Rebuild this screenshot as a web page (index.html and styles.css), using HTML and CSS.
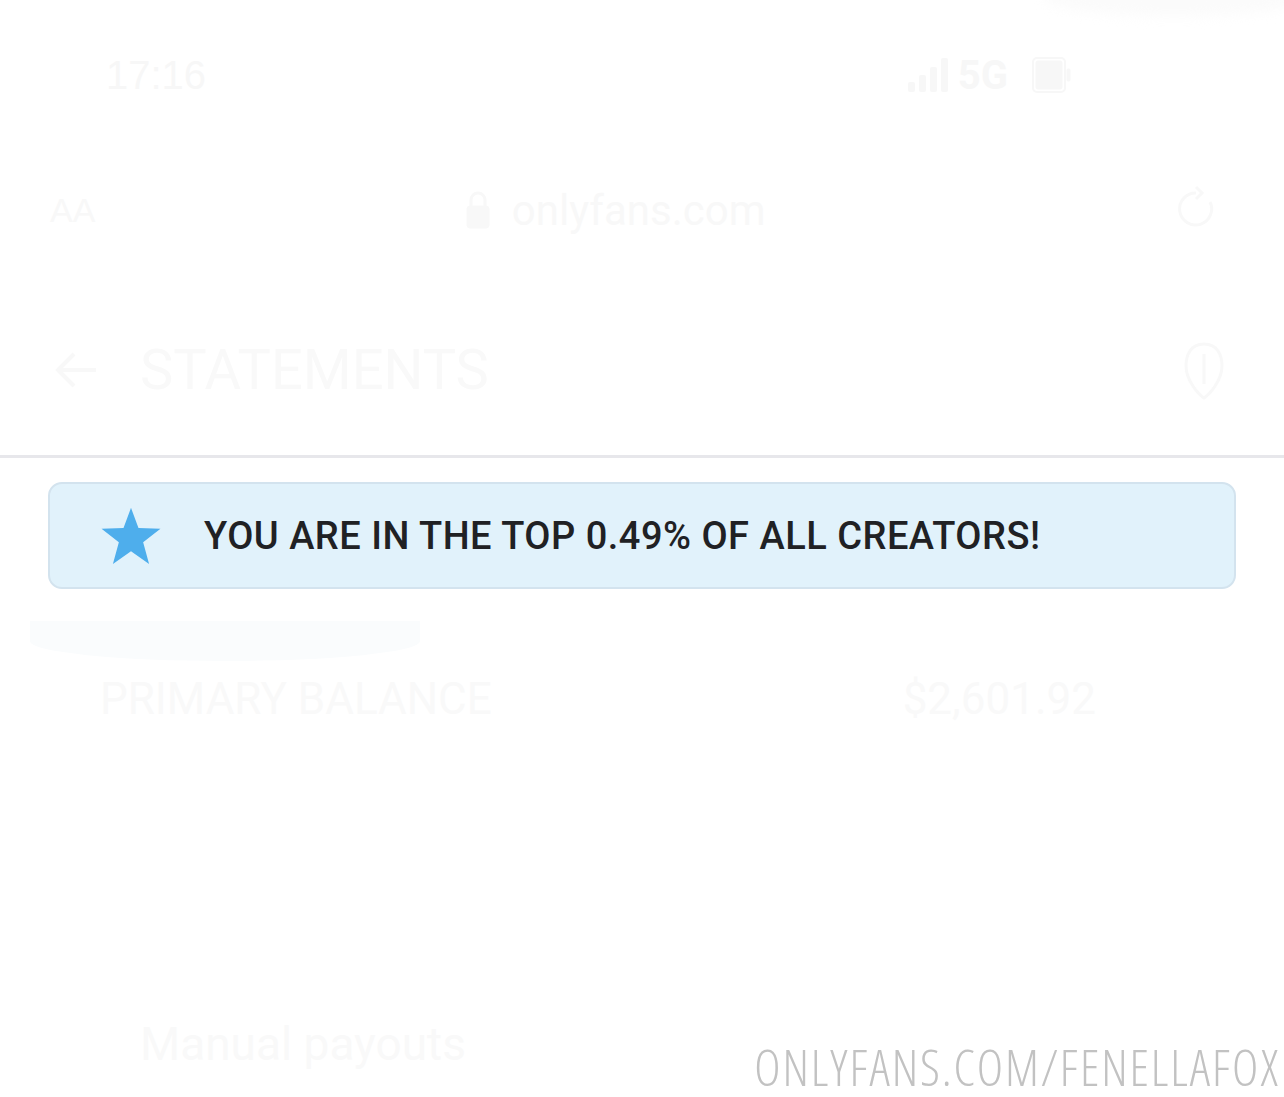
FILE: index.html
```html
<!DOCTYPE html>
<html lang="en">
<head>
<meta charset="utf-8">
<title>Statements</title>
<link rel="stylesheet" href="styles.css">
</head>
<body>
<div class="page">
  <div class="smudge"></div>
  <div class="status">
    <span class="time">17:16</span>
    <div class="status-right">
      <svg class="signal" width="40" height="34" viewBox="0 0 40 34"><rect x="0" y="24" width="7" height="10" rx="2"/><rect x="11" y="17" width="7" height="17" rx="2"/><rect x="22" y="9" width="7" height="25" rx="2"/><rect x="33" y="0" width="7" height="34" rx="2"/></svg>
      <span class="net">5G</span>
      <svg class="battery" width="40" height="36" viewBox="0 0 40 36"><rect x="1" y="1" width="32" height="34" rx="4" fill="none" stroke-width="2"/><rect x="4" y="4" width="26" height="28" rx="2"/><rect x="35" y="12" width="3" height="12" rx="1"/></svg>
    </div>
  </div>
  <div class="urlbar">
    <span class="aa">AA</span>
    <div class="url">
      <svg width="24" height="40" viewBox="0 0 24 40"><path d="M5 16 V10 a7 7 0 0 1 14 0 V16" fill="none" stroke-width="3"/><rect x="1" y="16" width="22" height="22" rx="3"/></svg>
      <span>onlyfans.com</span>
    </div>
    <svg class="reload" width="40" height="50" viewBox="0 0 40 50"><path d="M20 8 a16 16 0 1 0 14 9" fill="none" stroke-width="3"/><path d="M20 2 l6 6 l-6 6" fill="none" stroke-width="3"/></svg>
  </div>
  <div class="header">
    <svg class="back" width="44" height="40" viewBox="0 0 44 40"><path d="M42 20 H4 M20 4 L4 20 L20 36" fill="none" stroke-width="4"/></svg>
    <span class="title">STATEMENTS</span>
    <svg class="tip" width="44" height="60" viewBox="0 0 44 60"><path d="M22 4 C8 4 4 16 4 26 C4 40 16 54 22 58 C28 54 40 40 40 26 C40 16 36 4 22 4 Z M22 14 V44" fill="none" stroke-width="3"/></svg>
  </div>
  <div class="divider"></div>
  <div class="banner">
    <svg class="star" width="62" height="60" viewBox="0 0 24 23"><path d="M12 0.6 L14.9 8.4 L23.4 8.7 L16.7 13.9 L19 22.3 L12 17.4 L5 22.3 L7.3 13.9 L0.6 8.7 L9.1 8.4 Z" fill="#4eaeec"/></svg>
    <span class="banner-text">YOU ARE IN THE TOP 0.49% OF ALL CREATORS!</span>
  </div>
  <div class="balance">
    <div class="blob"></div>
    <div class="balance-row">
      <span class="bal-label">PRIMARY BALANCE</span>
      <span class="bal-value">$2,601.92</span>
    </div>
  </div>
  <div class="footer">
    <span class="manual">Manual payouts</span>
    <span class="watermark">ONLYFANS.COM/FENELLAFOX</span>
  </div>
</div>
</body>
</html>
```

FILE: styles.css
```css
html, body {
  margin: 0;
  padding: 0;
  background: #ffffff;
}
.page {
  position: relative;
  width: 1284px;
  height: 1097px;
  overflow: hidden;
  font-family: Roboto, "Liberation Sans", sans-serif;
  display: flex;
  flex-direction: column;
}
.smudge {
  position: absolute;
  top: -20px;
  right: -20px;
  width: 260px;
  height: 36px;
  border-radius: 50%;
  background: #fbfbfb;
  filter: blur(6px);
}
.status {
  height: 150px;
  display: flex;
  align-items: center;
  justify-content: space-between;
  padding: 0 212px 0 106px;
  box-sizing: border-box;
}
.time {
  font-family: "Liberation Sans", sans-serif;
  font-size: 40px;
  font-weight: 400;
  color: #f7f7f7;
}
.status-right {
  display: flex;
  align-items: center;
  gap: 10px;
  fill: #f7f7f7;
  stroke: #f7f7f7;
}
.net {
  font-size: 40px;
  font-weight: 700;
  color: #f7f7f7;
  margin-right: 14px;
}
.signal { stroke: none; }
.urlbar {
  height: 120px;
  display: flex;
  align-items: center;
  justify-content: space-between;
  padding: 0 68px 0 50px;
  fill: #f8f8f8;
  stroke: #f8f8f8;
}
.aa {
  font-size: 34px;
  color: #f8f8f8;
  font-family: "Liberation Sans", sans-serif;
}
.url {
  display: flex;
  align-items: center;
  gap: 22px;
  font-size: 42px;
  color: #f8f8f8;
  margin-right: 40px;
}
.url svg { stroke: #f8f8f8; fill: #f8f8f8; }
.header {
  height: 185px;
  display: flex;
  align-items: center;
  padding: 14px 58px 0 54px;
  box-sizing: border-box;
  fill: none;
  stroke: #f8f8f8;
}
.title {
  font-size: 56px;
  font-weight: 400;
  color: #f9f9f9;
  margin-left: 42px;
  flex: 1;
}
.divider {
  height: 3px;
  background: #e7e7eb;
}
.banner {
  margin: 24px 48px 0 48px;
  height: 107px;
  box-sizing: border-box;
  border: 2px solid #d3e3ee;
  border-radius: 14px;
  background: #e1f2fb;
  display: flex;
  align-items: center;
  padding-left: 50px;
}
.star {
  flex: none;
}
.banner-text {
  margin-left: 42px;
  font-size: 38px;
  font-weight: 500;
  color: #202124;
  letter-spacing: 0.5px;
}
.balance {
  position: relative;
  height: 180px;
}
.blob {
  position: absolute;
  left: 30px;
  top: 32px;
  width: 390px;
  height: 40px;
  background: #fafcfd;
  border-radius: 0 0 50% 50%;
}
.balance-row {
  position: relative;
  display: flex;
  justify-content: space-between;
  padding: 84px 188px 0 100px;
  font-size: 44px;
  color: #f9f9f9;
}
.footer {
  position: relative;
  flex: 1;
}
.manual {
  position: absolute;
  left: 140px;
  top: 248px;
  font-size: 46px;
  color: #f9f9f9;
}
.watermark {
  position: absolute;
  right: 4px;
  top: 273px;
  font-family: "Open Sans", sans-serif;
  font-stretch: 75%;
  font-weight: 300;
  font-size: 50px;
  line-height: 1;
  letter-spacing: 1.9px;
  color: #c2c2c2;
  white-space: nowrap;
}
```
